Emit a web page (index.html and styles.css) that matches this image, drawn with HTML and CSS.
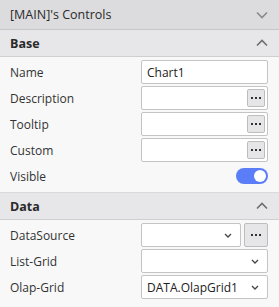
FILE: index.html
```html
<!DOCTYPE html>
<html>
<head>
<meta charset="utf-8">
<link rel="stylesheet" href="styles.css">
</head>
<body>
<div class="panel">
  <div class="title">
    <span>[MAIN]'s Controls</span>
    <svg class="chev" width="12" height="8" viewBox="0 0 12 8"><path d="M1 1.5 L6 6.5 L11 1.5" fill="none" stroke="#8a8a8a" stroke-width="1.6"/></svg>
  </div>
  <div class="section-head">
    <span>Base</span>
    <svg class="chev" width="12" height="8" viewBox="0 0 12 8"><path d="M1 6.5 L6 1.5 L11 6.5" fill="none" stroke="#6e6e6e" stroke-width="1.6"/></svg>
  </div>
  <div class="section-body">
    <div class="row"><span class="label">Name</span><div class="input"><span class="val">Chart1</span></div></div>
    <div class="row"><span class="label">Description</span><div class="input"><span class="val"></span><span class="dots"><svg width="10" height="2" viewBox="0 0 10 2"><rect x="0" y="0" width="2" height="2" fill="#333"/><rect x="4" y="0" width="2" height="2" fill="#333"/><rect x="8" y="0" width="2" height="2" fill="#333"/></svg></span></div></div>
    <div class="row"><span class="label">Tooltip</span><div class="input"><span class="val"></span><span class="dots"><svg width="10" height="2" viewBox="0 0 10 2"><rect x="0" y="0" width="2" height="2" fill="#333"/><rect x="4" y="0" width="2" height="2" fill="#333"/><rect x="8" y="0" width="2" height="2" fill="#333"/></svg></span></div></div>
    <div class="row"><span class="label">Custom</span><div class="input"><span class="val"></span><span class="dots"><svg width="10" height="2" viewBox="0 0 10 2"><rect x="0" y="0" width="2" height="2" fill="#333"/><rect x="4" y="0" width="2" height="2" fill="#333"/><rect x="8" y="0" width="2" height="2" fill="#333"/></svg></span></div></div>
    <div class="row"><span class="label">Visible</span><div class="toggle"><span class="knob"></span></div></div>
  </div>
  <div class="section-head">
    <span>Data</span>
    <svg class="chev" width="12" height="8" viewBox="0 0 12 8"><path d="M1 6.5 L6 1.5 L11 6.5" fill="none" stroke="#6e6e6e" stroke-width="1.6"/></svg>
  </div>
  <div class="section-body">
    <div class="row"><span class="label">DataSource</span>
      <div class="combo">
        <div class="input select short"><span class="val"></span><svg class="dd" width="8" height="5" viewBox="0 0 8 5"><path d="M1 1 L4 4 L7 1" fill="none" stroke="#444" stroke-width="1.3"/></svg></div>
        <span class="btn"><svg width="10" height="2" viewBox="0 0 10 2"><rect x="0" y="0" width="2" height="2" fill="#333"/><rect x="4" y="0" width="2" height="2" fill="#333"/><rect x="8" y="0" width="2" height="2" fill="#333"/></svg></span>
      </div>
    </div>
    <div class="row"><span class="label">List-Grid</span><div class="input select"><span class="val"></span><svg class="dd" width="8" height="5" viewBox="0 0 8 5"><path d="M1 1 L4 4 L7 1" fill="none" stroke="#444" stroke-width="1.3"/></svg></div></div>
    <div class="row"><span class="label">Olap-Grid</span><div class="input select"><span class="val">DATA.OlapGrid1</span><svg class="dd" width="8" height="5" viewBox="0 0 8 5"><path d="M1 1 L4 4 L7 1" fill="none" stroke="#444" stroke-width="1.3"/></svg></div></div>
  </div>
</div>
</body>
</html>
```
FILE: styles.css
```css
html, body { margin: 0; padding: 0; }
body {
  width: 279px;
  height: 307px;
  overflow: hidden;
  background: #f8f8f9;
  font-family: "Open Sans", "Noto Sans", sans-serif;
  font-size: 12px;
  color: #222;
}
.panel { width: 279px; }
.title {
  height: 29px;
  background: #dcdcde;
  border-bottom: 1px solid #c6c6c8;
  display: flex;
  align-items: center;
  justify-content: space-between;
  padding: 0 11px 0 10px;
  font-size: 12.5px;
  color: #2a2a2a;
}
.section-head {
  height: 26px;
  background: #e7e7ea;
  border-bottom: 1px solid #cfcfd2;
  border-top: 1px solid #dadadd;
  display: flex;
  align-items: center;
  justify-content: space-between;
  padding: 0 11px 0 10px;
  font-weight: 700;
  font-size: 12.5px;
  color: #2a2a2a;
}
.title + .section-head { border-top: none; }
.section-body {
  display: flex;
  flex-direction: column;
  gap: 2px;
  padding: 3px 11px 4px 10px;
}
.row {
  height: 24px;
  display: flex;
  align-items: center;
  justify-content: space-between;
}
.label { color: #333; }
.input {
  box-sizing: border-box;
  width: 127px;
  height: 24px;
  background: #fff;
  border: 1px solid #c4c4c4;
  border-radius: 2px;
  display: flex;
  align-items: center;
  justify-content: space-between;
  padding: 0 2px 0 5px;
}
.val { color: #222; }
.dots, .btn {
  box-sizing: border-box;
  width: 18px;
  height: 18px;
  background: #e6e6e8;
  border: 1px solid #bdbdbd;
  border-radius: 2px;
  display: flex;
  align-items: center;
  justify-content: center;
}
.combo { display: flex; gap: 3px; }
.input.short { width: 100px; }
.btn { width: 24px; height: 24px; }
.select { padding-right: 8px; }
.toggle {
  width: 32px;
  height: 16px;
  border-radius: 8px;
  background: #5b7df7;
  display: flex;
  align-items: center;
  justify-content: flex-end;
  padding: 0 2px;
  box-sizing: border-box;
}
.knob {
  width: 12px;
  height: 12px;
  border-radius: 50%;
  background: #fff;
}
```
